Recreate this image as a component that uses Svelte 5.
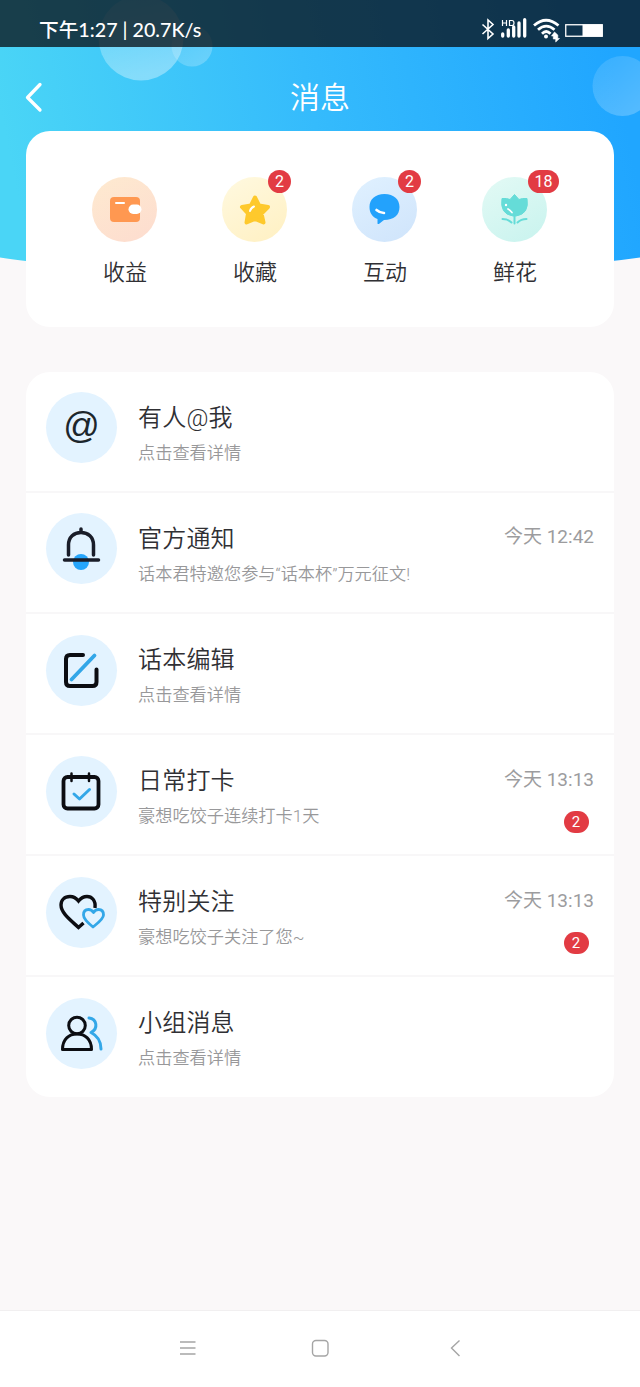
<script lang="ts">
	type Shortcut = { id: string; label: string; badge?: number };
	type Message = {
		id: string;
		title: string;
		detail: string;
		time?: string;
		badge?: number;
	};

	const shortcuts: Shortcut[] = [
		{ id: 'income', label: '收益' },
		{ id: 'favorite', label: '收藏', badge: 2 },
		{ id: 'interact', label: '互动', badge: 2 },
		{ id: 'flower', label: '鲜花', badge: 18 },
	];

	const messages: Message[] = [
		{ id: 'mention', title: '有人@我', detail: '点击查看详情' },
		{ id: 'notice', title: '官方通知', detail: '话本君特邀您参与“话本杯”万元征文!', time: '今天 12:42' },
		{ id: 'edit', title: '话本编辑', detail: '点击查看详情' },
		{ id: 'checkin', title: '日常打卡', detail: '豪想吃饺子连续打卡1天', time: '今天 13:13', badge: 2 },
		{ id: 'follow', title: '特别关注', detail: '豪想吃饺子关注了您~', time: '今天 13:13', badge: 2 },
		{ id: 'group', title: '小组消息', detail: '点击查看详情' },
	];
</script>

<div class="screen">
	<svg class="hero-bg" width="640" height="270" viewBox="0 0 640 270" aria-hidden="true">
		<defs>
			<linearGradient id="sky" gradientUnits="userSpaceOnUse" x1="0" y1="110" x2="600" y2="-10">
				<stop offset="0" stop-color="#4ad5f6" />
				<stop offset="0.5" stop-color="#35bbfc" />
				<stop offset="1" stop-color="#20a6ff" />
			</linearGradient>
			<linearGradient id="bubble" x1="0" y1="0" x2="0.3" y2="1">
				<stop offset="0" stop-color="#fff" stop-opacity="0.12" />
				<stop offset="1" stop-color="#fff" stop-opacity="0.36" />
			</linearGradient>
			<linearGradient id="bubble-soft" x1="0" y1="0" x2="0.8" y2="1">
				<stop offset="0" stop-color="#fff" stop-opacity="0.1" />
				<stop offset="1" stop-color="#fff" stop-opacity="0.24" />
			</linearGradient>
		</defs>
		<path d="M0 0H640V257.500Q610 262 570 264H70Q25 262 0 257.500Z" fill="url(#sky)" />
		<circle cx="141" cy="38" r="42.500" fill="url(#bubble)" />
		<circle cx="192" cy="46" r="20.500" fill="url(#bubble-soft)" />
		<circle cx="622.500" cy="86" r="30" fill="url(#bubble-soft)" />
	</svg>

	<div class="status-bar">
		<span class="clock">下午1:27 | 20.7K/s</span>
		<svg class="status-icons" width="126" height="28" viewBox="0 0 126 28" fill="none" stroke="#fff">
			<path d="M2.500 8.500L13 18L8 22.500V4L13 8.500L2.500 18" stroke-width="1.600" />
			<path d="M22.700 18V20M28.300 14V20M33.700 11V20M39 7V20M44.700 3.700V20" stroke-width="3.300" stroke-linecap="round" />
			<path d="M22.500 4V10M26.500 4V10M22.500 7H26.500M29.500 4.500H32Q34 4.500 34 7T32 9.500H29.500Z" stroke-width="1.200" />
			<g stroke-width="2.800">
				<path d="M54 9.500Q66 -1 78.500 9.500" />
				<path d="M58 13.700Q66.200 6.500 74.500 13.700" />
				<path d="M62 17.700Q66.200 13.500 70.500 17.700" />
			</g>
			<circle cx="66" cy="20.500" r="2" fill="#fff" stroke="none" />
			<path d="M74.500 16L71.500 20H73.300V23H75.700V26L79.500 22.500H77.800V19L74.500 16Z" fill="#fff" stroke-width="0.600" />
			<rect x="85.750" y="8.750" width="36.500" height="11.500" stroke-width="1.300" />
			<path d="M102.500 8.500H122.500V20.500H102.500Z" fill="#fff" stroke="none" />
		</svg>
	</div>

	<header class="nav">
		<button class="back" type="button" aria-label="返回">
			<svg width="20" height="32" viewBox="0 0 20 32">
				<path d="M17 2.500L4.500 15.500L17 28" fill="none" stroke="#fff" stroke-width="3.300" stroke-linecap="round" stroke-linejoin="round" />
			</svg>
		</button>
		<h1>消息</h1>
	</header>

	<section class="card shortcuts">
		{#each shortcuts as item (item.id)}
			<button class="shortcut" type="button">
				<span class="disc {item.id}">
					<svg width="65" height="65" viewBox="0 0 65 65">
						{#if item.id === 'income'}
							<rect x="18" y="20" width="30" height="25" rx="4" fill="#ff9851" />
							<rect x="36.500" y="27.500" width="13" height="9.500" rx="4.700" fill="#fff" />
							<path d="M24 26H32" stroke="#fff" stroke-width="2" stroke-linecap="round" />
						{:else if item.id === 'favorite'}
							<path d="M33 20.500L37 28.500L46 30L39.500 36.500L41.500 45.500L33 42L24.500 45.500L26 36.500L20 30L29 28.500Z" fill="#fec92c" stroke="#fec92c" stroke-width="4" stroke-linejoin="round" />
							<path d="M28 34Q29 30.500 32 29.500" fill="none" stroke="#fff" stroke-width="2" stroke-linecap="round" />
						{:else if item.id === 'interact'}
							<path d="M32.500 17C23 17 17.500 22.500 17.500 30C17.500 36 20.500 40 25.500 42V46.500Q26 47.500 27.500 46.500L32 43C42 43 47.500 38 47.500 30C47.500 22.500 42 17 32.500 17Z" fill="#23a2fc" />
							<path d="M24.500 33Q28 36 32 36" fill="none" stroke="#fff" stroke-width="2.600" stroke-linecap="round" />
						{:else}
							<path d="M32.500 17.500L37 22.500Q40 21 45 21.500Q47.500 37 34 39H31Q17.500 37 20 21.500Q25 21 28 22.500Z" fill="#65dcd8" stroke="#65dcd8" stroke-linejoin="round" />
							<path d="M32.500 38V46.500M20.500 42Q26 42 29.500 45.500M44.500 42Q39 42 35.500 45.500" fill="none" stroke="#65dcd8" stroke-width="2" stroke-linecap="round" />
							<circle cx="24" cy="28" r="1.200" fill="#fff" />
							<path d="M26 32Q28 33 30 35.500" fill="none" stroke="#fff" stroke-width="1.700" stroke-linecap="round" />
						{/if}
					</svg>
					{#if item.badge}
						<span class="badge corner" class:wide={item.badge > 9}>{item.badge}</span>
					{/if}
				</span>
				<span class="shortcut-label">{item.label}</span>
			</button>
		{/each}
	</section>

	<section class="card messages">
		{#each messages as msg (msg.id)}
			<div class="row">
				<div class="avatar">
					{#if msg.id === 'mention'}
						<span class="at">@</span>
					{:else}
						<svg width="71" height="71" viewBox="0 0 71 71" fill="none" stroke="#0c0d12" stroke-width="3.500" stroke-linecap="round" stroke-linejoin="round">
							{#if msg.id === 'notice'}
								<circle cx="35" cy="49" r="8" fill="#25a5fb" stroke="none" />
								<g stroke="#1a1d29">
									<path d="M22.500 42V32C22.500 24 28 19.500 35 19.500S47.500 24 47.500 32V42M35 16V19" />
									<path d="M18.500 47H52.500" />
								</g>
							{:else if msg.id === 'edit'}
								<path d="M37 20H24Q20 20 20 24V47Q20 51 24 51H46.500Q50.500 51 50.500 47V34.500" stroke-width="4" />
								<path d="M25.500 44.500L48.500 20.500" stroke="#33a7e8" stroke-width="3.800" />
							{:else if msg.id === 'checkin'}
								<rect x="17.500" y="21" width="35" height="31.500" rx="4" stroke-width="3.800" />
								<path d="M25.500 17.500V25M43 17.500V25" stroke-width="2.500" />
								<path d="M28 38L33.500 43L43.500 33.500" stroke="#33a7e8" stroke-width="3" />
							{:else if msg.id === 'follow'}
								<path d="M49 31C50 23 45.500 19.500 41 19.500Q36 19.500 32.500 24Q29 19.500 24 19.500C18.500 19.500 15 23 15 28C15 36 24.500 43 32.500 50.500L37.500 46" stroke-width="3.400" stroke-linecap="butt" stroke-linejoin="miter" />
								<path d="M47 50C42 46 37.500 42 37.500 38C37.500 34.500 39.500 32.500 42.500 32.500Q45.500 32.500 47.500 35.500Q49.500 32.500 52.500 32.500C55.500 32.500 57.500 34.500 57.500 38C57.500 42 52 46 47 50Z" stroke="#33a7e8" stroke-width="2.800" />
							{:else}
								<circle cx="31" cy="27.500" r="8.300" stroke-width="3" />
								<path d="M16.500 51.500C16.500 41 23 36 31 36S45.500 41 45.500 51.500Z" stroke-width="3" />
								<path d="M43 20C51 21 52.500 30.500 45 34.500C52 38 55 44 55 51" stroke="#33a7e8" stroke-width="3" />
							{/if}
						</svg>
					{/if}
				</div>
				<div class="body">
					<h2>{msg.title}</h2>
					<p>{msg.detail}</p>
				</div>
				{#if msg.time}
					<div class="meta">
						<time>{msg.time}</time>
						{#if msg.badge}
							<span class="badge">{msg.badge}</span>
						{/if}
					</div>
				{/if}
			</div>
		{/each}
	</section>

	<nav class="system-nav">
		<svg width="18" height="18" viewBox="0 0 18 18"><path d="M2 3H17.500M2 9H17.500M2 15H17.500" /></svg>
		<svg width="18" height="18" viewBox="0 0 18 18"><rect x="1.500" y="1.500" width="15.500" height="15.500" rx="3.500" /></svg>
		<svg width="18" height="18" viewBox="0 0 18 18"><path d="M15.500 1.500L7.500 9L15.500 17" /></svg>
	</nav>
</div>

<style>
	:global(body) {
		background: #faf8f9;
	}

	.screen {
		position: relative;
		display: flex;
		flex-direction: column;
		width: 640px;
		height: 1387px;
		overflow: hidden;
		background: #faf8f9;
		font-family: Roboto, 'Noto Sans CJK SC', sans-serif;
		font-weight: 350;
		color: #303034;
	}

	.screen * {
		box-sizing: border-box;
	}

	/* Gradient and bubbles sit behind the status bar, title and first card */
	.hero-bg {
		position: absolute;
		top: 0;
		left: 0;
	}

	.status-bar {
		position: relative;
		display: flex;
		align-items: center;
		justify-content: space-between;
		flex: none;
		height: 47px;
		padding: 12px 33px 0 39px;
		background: rgba(8, 12, 18, 0.75);
		color: #fff;
	}

	.clock {
		font-family: Lato, 'Noto Sans CJK SC', sans-serif;
		font-size: 19.7px;
		font-weight: 500;
		line-height: 28px;
		white-space: pre;
	}

	.status-icons {
		margin-right: 1px;
	}

	.nav {
		position: relative;
		display: grid;
		grid-template-columns: 60px 1fr 60px;
		align-items: center;
		flex: none;
		height: 84px;
		padding-top: 18px;
	}

	button {
		margin: 0;
		padding: 0;
		border: none;
		background: none;
		color: inherit;
		font: inherit;
	}

	.back {
		display: flex;
		padding-left: 23px;
	}

	h1 {
		margin: 0;
		color: #fff;
		font-size: 30px;
		font-weight: 350;
		line-height: 42px;
		text-align: center;
	}

	.card {
		position: relative;
		flex: none;
		margin: 0 26px;
		border-radius: 24px;
		background: #fff;
	}

	.shortcuts {
		display: grid;
		grid-template-columns: repeat(4, 130px);
		justify-content: center;
		height: 196px;
		padding: 46px 1px 0 0;
	}

	.shortcut {
		display: flex;
		flex-direction: column;
		align-items: center;
		gap: 15px;
	}

	.disc {
		position: relative;
		display: flex;
		width: 65px;
		height: 65px;
		border-radius: 50%;
	}

	.income {
		background: linear-gradient(150deg, #feead0, #fddccf);
	}

	.favorite {
		background: linear-gradient(150deg, #fff9e0, #fff0c2);
	}

	.interact {
		background: linear-gradient(150deg, #e0f1ff, #cfe4fb);
	}

	.flower {
		background: linear-gradient(150deg, #e3faf5, #c8f3ee);
	}

	.shortcut-label {
		padding-left: 1px;
		font-size: 22px;
		line-height: 32px;
	}

	.badge {
		display: flex;
		align-items: center;
		justify-content: center;
		width: 25px;
		height: 22px;
		border-radius: 11px;
		background: #e23b43;
		color: #fff;
		font-size: 15px;
		font-weight: 400;
		line-height: 22px;
	}

	.badge.corner {
		position: absolute;
		top: -7px;
		left: 46px;
		width: 23px;
		height: 23px;
		border-radius: 12px;
		font-size: 16px;
	}

	.badge.corner.wide {
		width: 31px;
	}

	.messages {
		margin-top: 45px;
		height: 725px;
	}

	.row {
		display: flex;
		height: 121.1px;
		padding: 20.4px 20px 0;
		border-bottom: 2px solid #f8f7f8;
	}

	.row:last-child {
		height: 119px;
		border-bottom: none;
	}

	.avatar {
		display: flex;
		align-items: center;
		justify-content: center;
		flex: none;
		width: 71px;
		height: 71px;
		border-radius: 50%;
		background: #e3f3ff;
	}

	.at {
		margin-top: -4px;
		font-family: 'Liberation Sans', sans-serif;
		font-size: 36px;
		font-weight: 400;
		line-height: 36px;
		color: #1c262c;
	}

	.body {
		flex: 1;
		padding: 7.5px 0 0 21px;
		white-space: nowrap;
	}

	h2 {
		margin: 0;
		font-size: 24px;
		font-weight: 350;
		line-height: 36px;
		letter-spacing: 0.2px;
	}

	p {
		margin: 3px 0 0;
		color: #98989a;
		font-size: 17.2px;
		line-height: 28px;
	}

	.meta {
		display: flex;
		flex-direction: column;
		align-items: flex-end;
		padding-top: 10px;
	}

	time {
		color: #9c9c9e;
		font-size: 19px;
		font-weight: 400;
		line-height: 28px;
	}

	.meta .badge {
		margin: 17.5px 5.5px 0 0;
	}

	.system-nav {
		display: flex;
		align-items: center;
		justify-content: center;
		gap: 115px;
		height: 77px;
		margin-top: auto;
		padding-bottom: 2px;
		border-top: 1px solid #f1eff0;
		background: #fff;
	}

	.system-nav svg {
		fill: none;
		stroke: #a5a5a5;
		stroke-width: 1.4;
	}
</style>
